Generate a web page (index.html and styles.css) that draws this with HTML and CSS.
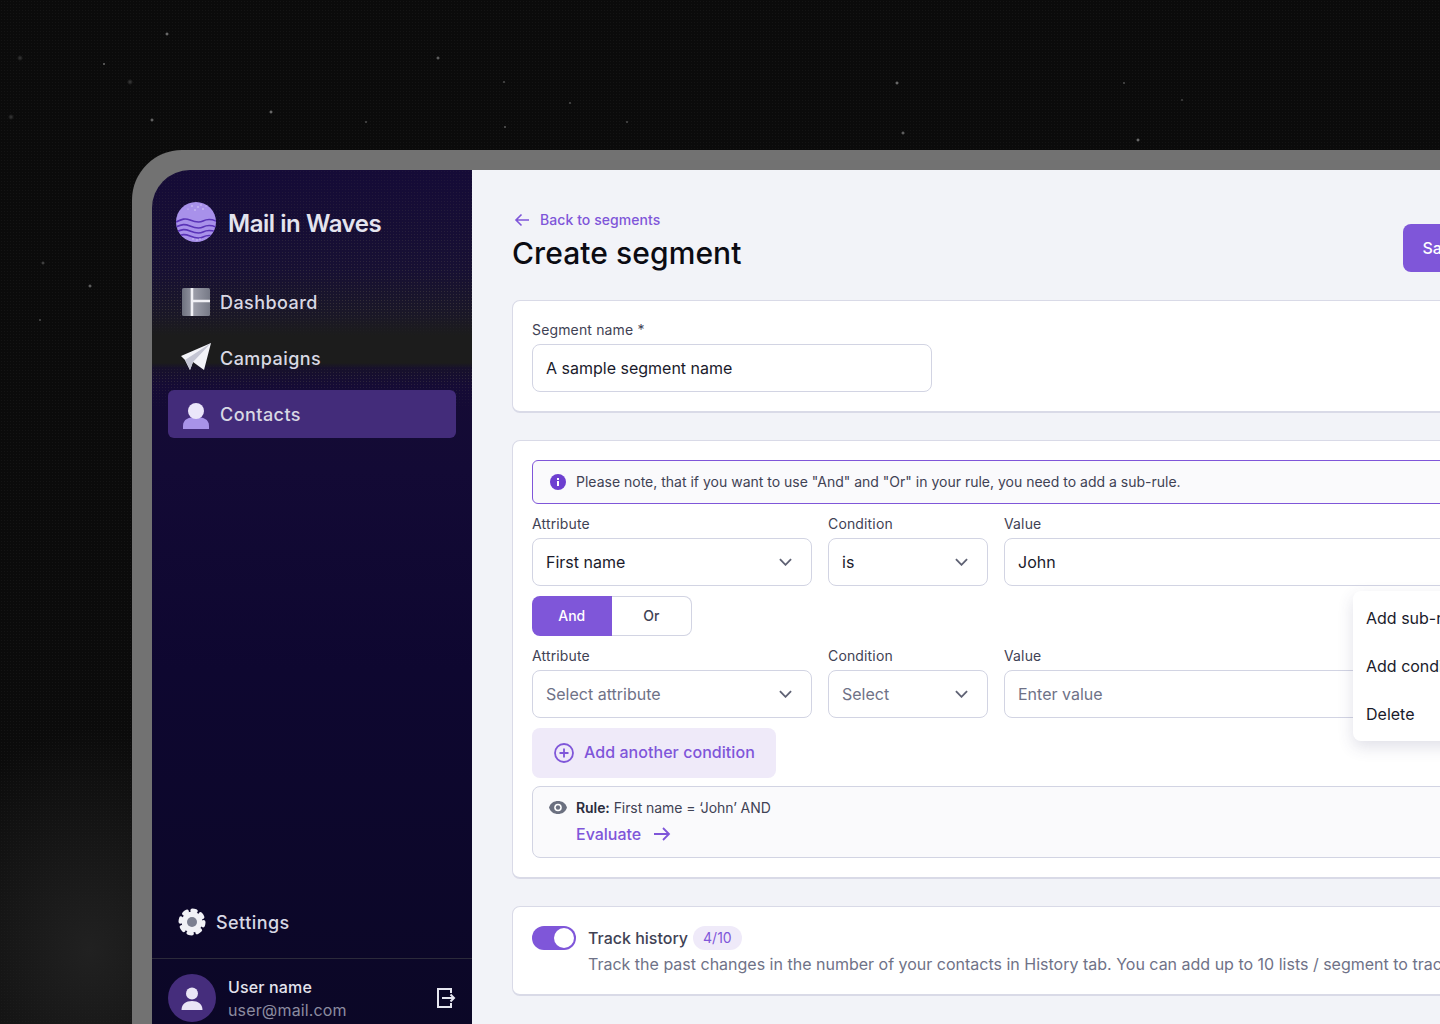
FILE: index.html
```html
<!DOCTYPE html>
<html lang="en">
<head>
<meta charset="utf-8">
<title>Create segment</title>
<link rel="stylesheet" href="styles.css">
</head>
<body>
<div class="frame">
  <aside class="sidebar">
    <div class="brand">
      <svg class="brand-logo" viewBox="0 0 40 40" width="40" height="40">
        <defs>
          <clipPath id="lc"><circle cx="20" cy="20" r="20"/></clipPath>
          <linearGradient id="dash" x1="0" y1="0" x2="1" y2="0"><stop offset="0" stop-color="#6e717e"/><stop offset=".45" stop-color="#9a9ca8"/><stop offset="1" stop-color="#767986"/></linearGradient>
        </defs>
        <circle cx="20" cy="20" r="20" fill="#a891ea"/>
        <g clip-path="url(#lc)" fill="none" stroke="#5a34b8" stroke-width="1.6">
          <path d="M0 20c6-3 9-4 14-2s9 3 13 1 8-2 13 0"/>
          <path d="M0 25c6-3 9-3 14-1s9 3 13 1 8-2 13 0"/>
          <path d="M0 30c6-3 9-3 14-1s9 3 13 1 8-2 13 0"/>
          <path d="M0 35c6-3 9-3 14-1s9 3 13 1 8-2 13 0"/>
        </g>
        <g fill="#d9d0f6"><circle cx="16" cy="4" r=".8"/><circle cx="22" cy="5" r=".8"/><circle cx="27" cy="7" r=".8"/><circle cx="19" cy="8" r=".8"/><circle cx="30" cy="4" r=".6"/><circle cx="12" cy="7" r=".6"/><circle cx="25" cy="3" r=".7"/><circle cx="17" cy="37" r=".7"/><circle cx="21" cy="38" r=".7"/><circle cx="24" cy="37" r=".7"/></g>
      </svg>
      <span class="brand-name">Mail in Waves</span>
    </div>
    <nav class="nav">
      <a class="nav-item">
        <svg class="nav-icon" viewBox="0 0 28 28" width="28" height="28">
          <rect x="0" y="0" width="28" height="28" rx="1.5" fill="url(#dash)"/>
          <path d="M10 0V28M10 13H28" stroke="#f1f1f6" stroke-width="2.6" fill="none"/>
        </svg>
        <span>Dashboard</span>
      </a>
      <a class="nav-item">
        <svg class="nav-icon plane" viewBox="0 0 32 32" width="32" height="32">
          <path d="M1 14 31 1 24 28 13 20 10 28 5 18Z" fill="#f3f3f8"/>
          <path d="M5 18 31 1 13 20 10 28Z" fill="#c4c5d3"/>
        </svg>
        <span>Campaigns</span>
      </a>
      <a class="nav-item is-active">
        <svg class="nav-icon" viewBox="0 0 28 28" width="28" height="28">
          <path d="M1 29v-3c0-7 6-9 13-9s13 2 13 9v3Z" fill="#a893e8"/>
          <circle cx="14" cy="11" r="8" fill="#ebe6fa"/>
        </svg>
        <span>Contacts</span>
      </a>
    </nav>
    <a class="nav-item settings">
      <svg class="nav-icon" viewBox="0 0 28 28" width="28" height="28">
        <circle cx="14" cy="14" r="10.5" fill="#f1f1f6"/>
        <circle cx="14" cy="14" r="11.500" fill="none" stroke="#f1f1f6" stroke-width="4" stroke-linecap="round" stroke-dasharray="3.500 5.530"/>
        <circle cx="14" cy="14" r="5" fill="#7c7f90"/>
      </svg>
      <span>Settings</span>
    </a>
    <div class="user">
      <div class="avatar">
        <svg viewBox="0 0 24 24" width="24" height="24">
          <circle cx="12" cy="7.5" r="6" fill="#e9e5f6"/>
          <path d="M1.5 24c0-6 4.500-9 10.500-9s10.500 3 10.500 9Z" fill="#e9e5f6"/>
        </svg>
      </div>
      <div class="user-text">
        <span class="user-name">User name</span>
        <span class="user-mail">user@mail.com</span>
      </div>
      <svg class="logout" viewBox="0 0 20 22" width="20" height="22" fill="none" stroke="#e6e6f0" stroke-width="2">
        <path d="M15 6V2H2V20H15V16"/>
        <path d="M6 11H18M14.500 7.500 18 11l-3.500 3.500"/>
      </svg>
    </div>
  </aside>

  <main class="main">
    <header class="page-head">
      <div>
        <a class="back">
          <svg viewBox="0 0 16 16" width="16" height="16" fill="none" stroke="#7f56d9" stroke-width="1.600">
            <path d="M15 8H2M7.500 2.500 2 8l5.500 5.500"/>
          </svg>
          <span class="back-text">Back to segments</span>
        </a>
        <h1 class="title">Create segment</h1>
      </div>
      <button class="save">Save</button>
    </header>

    <section class="card">
      <label class="label">Segment name *</label>
      <div class="field name-field">A sample segment name</div>
    </section>

    <section class="card rules">
      <div class="notice">
        <svg viewBox="0 0 16 16" width="16" height="16">
          <circle cx="8" cy="8" r="8" fill="#6d3fd0"/>
          <rect x="7" y="7" width="2" height="5" fill="#fff"/>
          <rect x="7" y="4" width="2" height="2" fill="#fff"/>
        </svg>
        <span class="notice-text">Please note, that if you want to use "And" and "Or" in your rule, you need to add a sub-rule.</span>
      </div>

      <div class="cond-row">
        <div class="col-attr">
          <label class="label">Attribute</label>
          <div class="field select">First name<svg class="chev" viewBox="0 0 14 8" width="13" height="8"><path d="M1 1l6 6 6-6"/></svg></div>
        </div>
        <div class="col-cond">
          <label class="label">Condition</label>
          <div class="field select">is<svg class="chev" viewBox="0 0 14 8" width="13" height="8"><path d="M1 1l6 6 6-6"/></svg></div>
        </div>
        <div class="col-val">
          <label class="label">Value</label>
          <div class="field">John</div>
        </div>
      </div>

      <div class="seg">
        <span class="seg-btn is-on">And</span>
        <span class="seg-btn">Or</span>
      </div>

      <div class="cond-row">
        <div class="col-attr">
          <label class="label">Attribute</label>
          <div class="field select is-empty">Select attribute<svg class="chev" viewBox="0 0 14 8" width="13" height="8"><path d="M1 1l6 6 6-6"/></svg></div>
        </div>
        <div class="col-cond">
          <label class="label">Condition</label>
          <div class="field select is-empty">Select<svg class="chev" viewBox="0 0 14 8" width="13" height="8"><path d="M1 1l6 6 6-6"/></svg></div>
        </div>
        <div class="col-val">
          <label class="label">Value</label>
          <div class="field is-empty">Enter value</div>
        </div>
      </div>

      <button class="add">
        <svg viewBox="0 0 20 20" width="20" height="20" fill="none" stroke="#7f56d9" stroke-width="1.800">
          <circle cx="10" cy="10" r="9"/><path d="M10 5.500v9M5.500 10h9"/>
        </svg>
        <span class="add-text">Add another condition</span>
      </button>

      <div class="rule-box">
        <svg class="eye" viewBox="0 0 18 13" width="18" height="13">
          <path d="M0 6.500C1.500 2 5 0 9 0s7.500 2 9 6.500C16.500 11 13 13 9 13S1.500 11 0 6.500Z" fill="#6b7080"/>
          <circle cx="9" cy="6.500" r="3.800" fill="#fff"/>
          <circle cx="9" cy="6.500" r="2.200" fill="#6b7080"/>
        </svg>
        <div class="rule-text">
          <p class="rule-line"><b>Rule:</b> First name = ‘John’ AND</p>
          <a class="evaluate">Evaluate
            <svg viewBox="0 0 18 16" width="18" height="16" fill="none" stroke="#7f56d9" stroke-width="1.800"><path d="M1 8h15M10 2l6 6-6 6"/></svg>
          </a>
        </div>
      </div>

      <ul class="menu">
        <li>Add sub-rule</li>
        <li>Add condition</li>
        <li>Delete</li>
      </ul>
    </section>

    <section class="card track">
      <div class="track-head">
        <span class="toggle"><span class="knob"></span></span>
        <span class="track-title">Track history</span>
        <span class="badge">4/10</span>
      </div>
      <p class="track-desc">Track the past changes in the number of your contacts in History tab. You can add up to 10 lists / segment to track.</p>
    </section>
  </main>
</div>
</body>
</html>
```

FILE: styles.css
```css
* { box-sizing: border-box; }
html, body { height: 1024px; overflow: hidden; }
body {
  margin: 0;
  font-family: Inter, "Liberation Sans", sans-serif;
  background-color: #0b0b0b;
  background-image:
    radial-gradient(circle at 167px 34px, #9a9a9a 0, transparent 2px),
    radial-gradient(circle at 20px 58px, #3a3a3a 0, transparent 3px),
    radial-gradient(circle at 104px 64px, #8f8f8f 0, transparent 1.500px),
    radial-gradient(circle at 130px 82px, #3f3f3f 0, transparent 3px),
    radial-gradient(circle at 11px 117px, #3a3a3a 0, transparent 3px),
    radial-gradient(circle at 152px 120px, #8f8f8f 0, transparent 2px),
    radial-gradient(circle at 271px 112px, #9a9a9a 0, transparent 2px),
    radial-gradient(circle at 438px 58px, #8a8a8a 0, transparent 2px),
    radial-gradient(circle at 504px 82px, #6a6a6a 0, transparent 1.500px),
    radial-gradient(circle at 570px 103px, #6a6a6a 0, transparent 1.500px),
    radial-gradient(circle at 366px 122px, #6a6a6a 0, transparent 1.500px),
    radial-gradient(circle at 505px 127px, #7a7a7a 0, transparent 1.500px),
    radial-gradient(circle at 627px 122px, #6a6a6a 0, transparent 1.500px),
    radial-gradient(circle at 897px 83px, #9a9a9a 0, transparent 2px),
    radial-gradient(circle at 1124px 83px, #6a6a6a 0, transparent 1.500px),
    radial-gradient(circle at 903px 133px, #8a8a8a 0, transparent 2px),
    radial-gradient(circle at 1138px 140px, #9a9a9a 0, transparent 2px),
    radial-gradient(circle at 1182px 100px, #5a5a5a 0, transparent 1.500px),
    radial-gradient(circle at 43px 263px, #5a5a5a 0, transparent 2px),
    radial-gradient(circle at 90px 286px, #8a8a8a 0, transparent 2px),
    radial-gradient(circle at 40px 320px, #6a6a6a 0, transparent 1.500px),
    radial-gradient(ellipse 180px 220px at 90px 950px, #212121, transparent),
    radial-gradient(circle, #141414 0 .6px, transparent 1px);
  background-size: auto, auto, auto, auto, auto, auto, auto, auto, auto, auto, auto, auto, auto, auto, auto, auto, auto, auto, auto, auto, auto, auto, 3px 3px;
  padding: 150px 0 0 132px;
}

.frame {
  width: 1388px;
  height: 888px;
  padding: 20px 0 0 20px;
  background: #727272;
  border-radius: 50px 0 0 0;
  display: flex;
}

/* Sidebar */
.sidebar {
  width: 320px;
  flex: none;
  display: flex;
  flex-direction: column;
  position: relative;
  isolation: isolate;
  border-radius: 38px 0 0 0;
  padding-top: 32px;
  background-color: #120a33;
  background-image:
    linear-gradient(180deg, #150b37 0, #171033 100px, #1a1727 145px, #1c1c1c 165px, #1c1c1c 193px, #17112b 198px, #150b35 216px, #130a35 300px, #0e0730 500px, #0b0726 868px);
}
.sidebar::before {
  content: "";
  position: absolute;
  left: 0;
  right: 0;
  top: 0;
  height: 240px;
  z-index: -1;
  border-radius: inherit;
  background-image: radial-gradient(circle, rgba(125, 120, 95, .28) 0 .6px, transparent 1px);
  background-size: 3px 3px;
  -webkit-mask-image: linear-gradient(180deg, rgba(0, 0, 0, .3) 0, #000 140px, transparent 165px, transparent 195px, #000 205px, transparent 240px);
  mask-image: linear-gradient(180deg, rgba(0, 0, 0, .3) 0, #000 140px, transparent 165px, transparent 195px, #000 205px, transparent 240px);
}
.brand { display: flex; align-items: center; gap: 12px; padding-left: 24px; height: 40px; }
.brand-logo { flex: none; }
.brand-name { font-size: 24px; font-weight: 600; letter-spacing: -.45px; color: #e4e4ee; padding-top: 2px; }
.nav { display: flex; flex-direction: column; gap: 8px; margin: 36px 16px 0; }
.nav-item {
  display: flex;
  align-items: center;
  gap: 10px;
  height: 48px;
  padding-left: 14px;
  border-radius: 6px;
  font-size: 18px;
  font-weight: 500;
  letter-spacing: .45px;
  color: #d8d8e4;
}
.nav-item.is-active { background: #432c7a; }
.nav-icon { flex: none; overflow: visible; }
.plane { margin: 0 -2px; }
.settings { margin: auto 16px 12px; padding-left: 10px; }
.user {
  display: flex;
  align-items: flex-start;
  gap: 12px;
  padding: 15px 16px 16px;
  border-top: 1px solid #2b2a3a;
}
.avatar {
  width: 48px;
  height: 48px;
  flex: none;
  border-radius: 50%;
  background: #452d7c;
  display: flex;
  align-items: center;
  justify-content: center;
}
.user-text { display: flex; flex-direction: column; flex: 1; padding-top: 2px; line-height: 23px; letter-spacing: .15px; }
.user-name { font-size: 16px; font-weight: 500; color: #e4e4ee; }
.user-mail { font-size: 16px; color: #8c8ca0; }
.logout { margin-top: 13px; flex: none; }

/* Main */
.main {
  flex: 1;
  min-width: 0;
  background: #f2f3f8;
  padding: 40px;
  display: flex;
  flex-direction: column;
  gap: 27px;
}
.page-head { display: flex; justify-content: space-between; align-items: flex-end; margin-bottom: 1px; }
.back {
  display: flex;
  align-items: center;
  gap: 12px;
  height: 20px;
  margin-bottom: 6px;
  font-size: 14px;
  font-weight: 500;
  letter-spacing: .07px;
  color: #7f56d9;
}
.back svg { margin-left: 2px; margin-right: -2px; }
.back-text { padding-bottom: 2px; }
.title { margin: 0 0 1px; font-size: 30px; line-height: 35px; font-weight: 500; letter-spacing: .08px; color: #0b0b12; }
.save {
  height: 48px;
  padding: 0 20px;
  border: 0;
  border-radius: 8px;
  background: #7f56d9;
  color: #fff;
  font: 500 16px Inter, "Liberation Sans", sans-serif;
}

.card {
  background: #fff;
  border: 1px solid #d9dae7;
  border-bottom-width: 2px;
  border-radius: 8px;
  padding: 19px;
  position: relative;
}
.label { display: block; height: 20px; margin-bottom: 4px; font-size: 14px; line-height: 20px; letter-spacing: .15px; color: #3f4254; }
.field {
  height: 48px;
  padding: 0 19px 0 13px;
  display: flex;
  align-items: center;
  justify-content: space-between;
  background: #fff;
  border: 1px solid #d2d4e3;
  border-radius: 8px;
  font-size: 16px;
  color: #1a1b2b;
}
.field.is-empty { color: #6f7287; }
.name-field { width: 400px; }
.chev { fill: none; stroke: #5f6274; stroke-width: 2; flex: none; }
.notice {
  height: 44px;
  display: flex;
  align-items: center;
  gap: 10px;
  padding-left: 17px;
  margin-bottom: 10px;
  background: #fafafc;
  border: 1px solid #7f56d9;
  border-radius: 6px;
  font-size: 14px;
  color: #3f4254;
}
.notice-text { padding-bottom: 2px; }
.cond-row { display: flex; gap: 16px; margin-bottom: 10px; }
.col-attr { width: 280px; flex: none; }
.col-cond { width: 160px; flex: none; }
.col-val { flex: 1; }
.seg { display: flex; width: 160px; height: 40px; margin-bottom: 10px; }
.seg-btn {
  flex: 1;
  display: flex;
  align-items: center;
  justify-content: center;
  padding-bottom: 2px;
  font-size: 14px;
  font-weight: 500;
  color: #3f4254;
  background: #fff;
  border: 1px solid #d2d4e3;
  border-left: 0;
  border-radius: 0 8px 8px 0;
}
.seg-btn.is-on { background: #7f56d9; border: 0; color: #fff; border-radius: 8px 0 0 8px; }
.add {
  display: flex;
  align-items: center;
  gap: 10px;
  width: 244px;
  height: 50px;
  padding: 0 0 0 22px;
  margin-bottom: 8px;
  border: 0;
  border-radius: 8px;
  background: #efeaf9;
  color: #7f56d9;
  font: 500 16px Inter, "Liberation Sans", sans-serif;
  letter-spacing: .05px;
}
.add-text { padding-bottom: 2px; }
.rule-box {
  display: flex;
  gap: 9px;
  padding: 11px 16px 13px;
  height: 72px;
  background: #fafafc;
  border: 1px solid #d2d4e3;
  border-radius: 8px;
}
.eye { flex: none; margin-top: 3px; }
.rule-line { margin: 0 0 6px; font-size: 14px; line-height: 20px; letter-spacing: -.07px; color: #3f4254; }
.rule-line b { font-weight: 600; color: #2a2c3d; }
.evaluate { display: flex; align-items: center; gap: 12px; font-size: 16px; line-height: 20px; font-weight: 500; color: #7f56d9; }
.menu {
  position: absolute;
  left: 840px;
  top: 150px;
  width: 200px;
  margin: 0;
  padding: 3px 0;
  list-style: none;
  background: #fff;
  border-radius: 8px;
  box-shadow: 0 6px 16px rgba(60, 60, 110, .16);
  font-size: 16px;
  color: #1a1b2b;
}
.menu li { height: 48px; line-height: 48px; padding-left: 13px; }

.track-head { display: flex; align-items: center; height: 24px; margin-bottom: 4px; }
.toggle {
  width: 44px;
  height: 24px;
  flex: none;
  padding: 2px;
  display: flex;
  justify-content: flex-end;
  background: #7f56d9;
  border-radius: 12px;
  margin-right: 12px;
}
.knob { width: 20px; height: 20px; border-radius: 50%; background: #fff; }
.track-title { font-size: 16px; font-weight: 500; color: #3f4254; margin-right: 5px; }
.badge {
  height: 24px;
  padding: 0 10px;
  border-radius: 12px;
  background: #efeaf9;
  color: #7f56d9;
  font-size: 14px;
  line-height: 24px;
}
.track-desc { margin: 0 0 1px; padding-left: 56px; font-size: 16px; line-height: 20px; color: #6f7287; white-space: nowrap; }
```
